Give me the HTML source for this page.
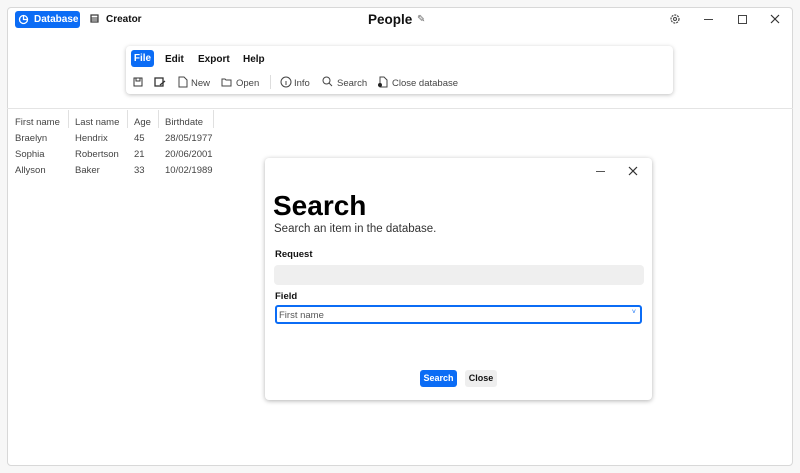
<!DOCTYPE html>
<html><head><style>
*{margin:0;padding:0;box-sizing:border-box}
body{width:800px;height:473px;background:#f7f7f7;font-family:"Liberation Sans",sans-serif;position:relative;overflow:hidden;color:#111}
.win{position:absolute;left:7px;top:7px;width:786px;height:459px;background:#fff;border:1px solid #d8d8d8;border-radius:4px}
.a{position:absolute}
.btnb{background:#0b6cf5;color:#fff;font-weight:bold;border-radius:3px}
.t{font-size:9.5px;color:#444}
svg{position:absolute}
</style></head><body>
<div class="win"></div>
<div class="a btnb" style="left:15px;top:11px;width:65px;height:17px;font-size:10px;line-height:17px;padding-left:19px">Database</div>
<svg style="left:18px;top:14px" width="11" height="11" viewBox="0 0 11 11"><circle cx="5.5" cy="5.5" r="4" fill="none" stroke="#fff" stroke-width="1.3"/><path d="M5.5 1.5V5.5H9.5" stroke="#fff" stroke-width="1.3" fill="none"/></svg>
<svg style="left:90px;top:14px" width="10" height="10" viewBox="0 0 10 10"><rect x="1" y="1" width="7" height="7" fill="none" stroke="#333" stroke-width="1.2"/><path d="M1 4H8M1 6H8" stroke="#333"/></svg>
<div class="a" style="left:106px;top:14px;font-size:10px;font-weight:bold">Creator</div>
<div class="a" style="left:368px;top:12px;font-size:13.5px;font-weight:bold">People</div>
<div class="a" style="left:417px;top:14px;font-size:10px;color:#666">✎</div>
<svg style="left:669px;top:13px" width="12" height="12" viewBox="0 0 12 12"><circle cx="6" cy="6" r="4" fill="none" stroke="#444" stroke-width="1.2" stroke-dasharray="2 1"/><circle cx="6" cy="6" r="1.5" fill="none" stroke="#444"/></svg>
<div class="a" style="left:704px;top:19px;width:9px;height:1px;background:#444"></div>
<div class="a" style="left:738px;top:15px;width:9px;height:9px;border:1px solid #444"></div>
<svg style="left:770px;top:14px" width="10" height="10"><path d="M1 1L9 9M9 1L1 9" stroke="#333" stroke-width="1.2"/></svg>

<div class="a" style="left:126px;top:46px;width:547px;height:48px;background:#fff;border-radius:4px;box-shadow:0 1px 4px rgba(0,0,0,.25)"></div>
<div class="a btnb" style="left:131px;top:50px;width:23px;height:17px;font-size:10px;line-height:17px;text-align:center">File</div>
<div class="a" style="left:165px;top:54px;font-size:10px;font-weight:bold">Edit</div>
<div class="a" style="left:198px;top:54px;font-size:10px;font-weight:bold">Export</div>
<div class="a" style="left:243px;top:54px;font-size:10px;font-weight:bold">Help</div>
<svg style="left:133px;top:77px" width="10" height="10"><rect x="1" y="1" width="8" height="8" fill="none" stroke="#333"/><rect x="3" y="1" width="4" height="3" fill="none" stroke="#333"/></svg>
<svg style="left:154px;top:77px" width="12" height="10"><rect x="1" y="1" width="8" height="8" fill="none" stroke="#333" stroke-width="1.3"/><path d="M6 8L11 4" stroke="#333" stroke-width="1.3"/></svg>
<svg style="left:178px;top:76px" width="10" height="12"><path d="M1 1H6L9 4V11H1Z" fill="none" stroke="#444"/></svg>
<div class="a t" style="left:191px;top:78px">New</div>
<svg style="left:221px;top:77px" width="12" height="10"><path d="M1 2H4L5 3H10V9H1Z" fill="none" stroke="#444"/></svg>
<div class="a t" style="left:236px;top:78px">Open</div>
<div class="a" style="left:270px;top:75px;width:1px;height:14px;background:#ddd"></div>
<svg style="left:280px;top:76px" width="12" height="12"><circle cx="6" cy="6" r="5" fill="none" stroke="#444"/><path d="M6 5V9" stroke="#444"/></svg>
<div class="a t" style="left:294px;top:78px">Info</div>
<svg style="left:322px;top:76px" width="11" height="11"><circle cx="4.5" cy="4.5" r="3.5" fill="none" stroke="#444"/><path d="M7 7L10 10" stroke="#444"/></svg>
<div class="a t" style="left:337px;top:78px">Search</div>
<svg style="left:377px;top:76px" width="11" height="12"><path d="M3 1H7L10 4V11H3Z" fill="none" stroke="#444"/><circle cx="3" cy="9" r="2" fill="#222"/></svg>
<div class="a t" style="left:392px;top:78px">Close database</div>

<div class="a" style="left:7px;top:108px;width:786px;height:1px;background:#e4e4e4"></div>
<div class="a" style="left:68px;top:110px;width:1px;height:18px;background:#e0e0e0"></div>
<div class="a" style="left:127px;top:110px;width:1px;height:18px;background:#e0e0e0"></div>
<div class="a" style="left:158px;top:110px;width:1px;height:18px;background:#e0e0e0"></div>
<div class="a" style="left:213px;top:110px;width:1px;height:18px;background:#e0e0e0"></div>
<div class="a t" style="left:15px;top:115px;line-height:16px">First name<br>Braelyn<br>Sophia<br>Allyson</div>
<div class="a t" style="left:75px;top:115px;line-height:16px">Last name<br>Hendrix<br>Robertson<br>Baker</div>
<div class="a t" style="left:134px;top:115px;line-height:16px">Age<br>45<br>21<br>33</div>
<div class="a t" style="left:165px;top:115px;line-height:16px">Birthdate<br>28/05/1977<br>20/06/2001<br>10/02/1989</div>

<div class="a" style="left:265px;top:158px;width:387px;height:242px;background:#fff;border-radius:4px;box-shadow:0 1px 5px rgba(0,0,0,.3)"></div>
<div class="a" style="left:596px;top:171px;width:9px;height:1px;background:#555"></div>
<svg style="left:628px;top:166px" width="10" height="10"><path d="M1 1L9 9M9 1L1 9" stroke="#333" stroke-width="1.2"/></svg>
<div class="a" style="left:273px;top:190px;font-size:28px;font-weight:bold;color:#000">Search</div>
<div class="a" style="left:274px;top:223px;font-size:11.5px;color:#333">Search an item in the database.</div>
<div class="a" style="left:275px;top:249px;font-size:9.5px;font-weight:bold">Request</div>
<div class="a" style="left:274px;top:265px;width:370px;height:20px;background:#efefef;border-radius:4px"></div>
<div class="a" style="left:275px;top:291px;font-size:9.5px;font-weight:bold">Field</div>
<div class="a" style="left:275px;top:305px;width:367px;height:19px;border:2px solid #0b6cf5;border-radius:3px;font-size:9.5px;color:#555;padding:3px 0 0 2px">First name<span style="position:absolute;right:4px;top:2px;font-size:7px;color:#0b6cf5">˅</span></div>
<div class="a btnb" style="left:420px;top:370px;width:37px;height:17px;font-size:9px;line-height:17px;text-align:center">Search</div>
<div class="a" style="left:465px;top:370px;width:32px;height:17px;font-size:9px;line-height:17px;text-align:center;background:#eee;border-radius:3px;font-weight:bold">Close</div>
</body></html>
